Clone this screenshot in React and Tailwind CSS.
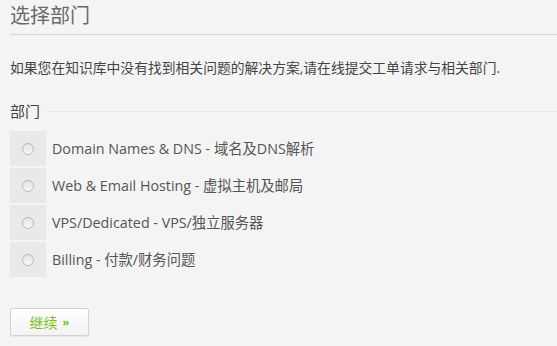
import React, { useState } from 'react'

const departments = [
  'Domain Names & DNS - 域名及DNS解析',
  'Web & Email Hosting - 虚拟主机及邮局',
  'VPS/Dedicated - VPS/独立服务器',
  'Billing - 付款/财务问题',
]

const font = { fontFamily: '"Open Sans", "Noto Sans CJK SC", sans-serif' }

const App = () => {
  const [selected, setSelected] = useState(null)

  return (
    <div className="w-[557px] h-[346px] bg-[#f4f4f4] pl-[10px] pt-[3px] text-[#555]" style={font}>
      {/* Title */}
      <h2 className="text-[20px] leading-[26px] text-[#6a6a6a] pb-[5px] border-b border-[#d6d6d6]">选择部门</h2>

      <p className="mt-[23px] text-[13.8px] leading-[20px] text-[#444]">
        如果您在知识库中没有找到相关问题的解决方案,请在线提交工单请求与相关部门.
      </p>

      {/* Department fieldset */}
      <div className="mt-[23px] flex items-center gap-[7px]">
        <span className="text-[15px] leading-[20px] text-[#444]">部门</span>
        <div className="flex-1 border-t border-[#e6e6e6]" />
      </div>

      <div className="mt-[10px] flex flex-col gap-[2px]">
        {departments.map((d, i) => (
          <label key={d} className="flex items-center h-[35px] cursor-pointer" onClick={() => setSelected(i)}>
            <span className="w-[36px] h-full bg-[#e9e9e9] flex items-center justify-center">
              <span className="w-[12px] h-[12px] rounded-full border border-[#b8b8b8] bg-gradient-to-b from-[#e4e4e4] to-[#f8f8f8] flex items-center justify-center">
                {selected === i && <span className="w-[5px] h-[5px] rounded-full bg-[#555]" />}
              </span>
            </span>
            <span className="ml-[6px] text-[14.3px] text-[#555]">{d}</span>
          </label>
        ))}
      </div>

      <button className="mt-[31px] w-[79px] h-[28px] rounded-[2px] border border-[#d2d2d2] bg-gradient-to-b from-white to-[#f2f2f2] shadow-[0_1px_1px_rgba(0,0,0,0.06)] text-[14px] text-[#7cbf1c] flex items-center justify-center gap-[5px]">
        继续 <span className="text-[11px] font-bold">»</span>
      </button>
    </div>
  )
}

export default App
